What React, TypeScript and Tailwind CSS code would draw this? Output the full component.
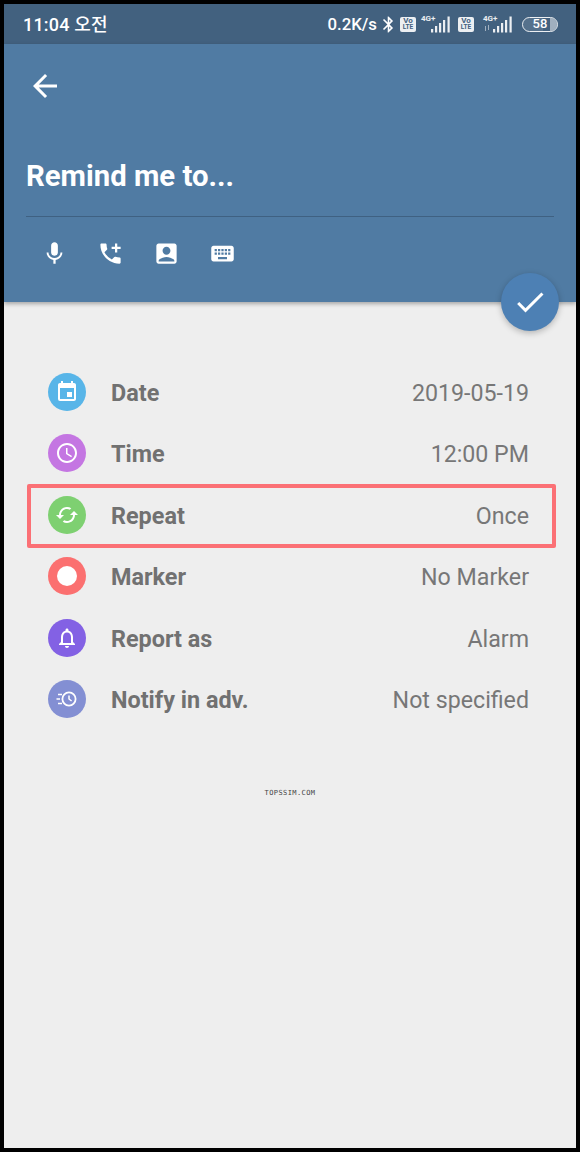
import { MdAccessTime, MdAccountBox, MdAddIcCall, MdArrowBack, MdBluetooth, MdCheck, MdEvent, MdKeyboard, MdMic, MdNotificationsNone, MdSync } from 'react-icons/md'
import type { ReactNode } from 'react'

const font = { fontFamily: 'Roboto, sans-serif' }

function VoLte() {
  return (
    <div className="flex h-[15px] w-[16px] flex-col items-center justify-center rounded-[2px] bg-white/90 text-[#42617f] [font-family:Roboto,sans-serif] text-[8px] leading-[7px] font-bold">
      <span>Vo</span>
      <span className="text-[6.5px] leading-[7px]">LTE</span>
    </div>
  )
}

function Signal({ arrows }: { arrows?: boolean }) {
  return (
    <div className="relative h-[18px] w-[30px]">
      <span className="absolute top-[-1px] left-0 text-[8px] leading-[10px] font-bold text-white/90">4G+</span>
      <svg width="30" height="18" viewBox="0 0 30 18" className="absolute inset-0" fill="#fff" fillOpacity="0.9">
        {arrows && <path d="M2 11h1v5H2zM5 10h1v5H5z" fillOpacity="0.5" />}
        <rect x="10" y="14" width="2.2" height="3.5" />
        <rect x="14" y="11" width="2.2" height="6.5" />
        <rect x="18" y="8" width="2.2" height="9.5" />
        <rect x="22" y="5" width="2.2" height="12.5" />
        <rect x="26.5" y="1.5" width="2.2" height="16" />
      </svg>
    </div>
  )
}

function Battery() {
  return (
    <div className="relative flex h-[15px] w-[36px] items-center justify-center overflow-hidden rounded-full border border-white/90 text-[13px] font-medium text-white">
      <div className="absolute inset-y-0 left-0 w-[58%] bg-white/10" />
      <div className="absolute inset-y-0 right-0 w-[7px] bg-white/50" />
      <span className="relative">58</span>
    </div>
  )
}

function AdvIcon() {
  return (
    <svg width="24" height="24" viewBox="0 0 24 24" fill="none" stroke="#fff" strokeWidth="1.8">
      <circle cx="14" cy="12" r="6.6" />
      <path d="M14 8.5V12l2.6 2" strokeWidth="1.5" />
      <path d="M3 7.5h4M1.5 12h3.5M3 16.5h4" strokeWidth="1.6" />
    </svg>
  )
}

interface RowProps {
  color: string
  icon: ReactNode
  label: string
  value: string
}

function Row({ color, icon, label, value }: RowProps) {
  return (
    <div className="flex h-[61.5px] items-center pr-[47px] pl-[44px]">
      <div className={`flex h-[38px] w-[38px] shrink-0 items-center justify-center rounded-full text-white ${color}`}>{icon}</div>
      <span className="ml-[25px] pt-[3px] text-[23.4px] font-bold text-[#717171]">{label}</span>
      <span className="ml-auto pt-[3px] text-[23.2px] text-[#777777]">{value}</span>
    </div>
  )
}

export default function App() {
  return (
    <div className="h-[1152px] w-[580px] overflow-hidden bg-black pt-1 pr-1 pb-1 pl-1" style={font}>
      <div className="relative flex h-[1144px] w-[572px] flex-col bg-[#eeeeee]">
        <div className="flex h-[40px] shrink-0 items-center bg-[#42617f] pr-[18px] pl-[19px] text-white">
          <span className="pt-[1px] text-[18px] font-medium tracking-[0.2px] [font-family:Roboto,'Noto_Sans_CJK_KR',sans-serif]">11:04 오전</span>
          <div className="ml-auto flex items-center">
            <span className="pt-[1px] text-[16.8px] font-medium">0.2K/s</span>
            <MdBluetooth size={19} className="ml-[2px]" />
            <div className="ml-[2px]"><VoLte /></div>
            <div className="ml-[5px]"><Signal /></div>
            <div className="ml-[7px]"><VoLte /></div>
            <div className="ml-[9px]"><Signal arrows /></div>
            <div className="ml-[9px]"><Battery /></div>
          </div>
        </div>

        <div className="flex h-[258px] shrink-0 flex-col bg-[#507ba3] pr-[22px] pl-[22px] shadow-[0_2px_4px_rgba(0,0,0,0.3)]">
          <div className="mt-[23.5px] flex pl-[1px] text-white">
            <MdArrowBack size={36} />
          </div>
          <div className="mt-[52.5px] text-[29.3px] leading-[40px] font-bold text-white">Remind me to...</div>
          <div className="mt-[20px] h-px bg-[#3f6182]" />
          <div className="mt-[22.5px] flex gap-[29px] pl-[14.5px] text-white">
            <MdMic size={27} />
            <MdAddIcCall size={27} />
            <MdAccountBox size={27} />
            <MdKeyboard size={27} />
          </div>
        </div>

        <div className="absolute top-[269px] left-[496.5px] flex h-[58px] w-[58px] items-center justify-center rounded-full bg-[#4d80b4] text-white shadow-[0_2px_6px_rgba(0,0,0,0.25)]">
          <MdCheck size={36} />
        </div>

        <div className="relative mt-[59px]">
          <Row color="bg-[#58b5e8]" icon={<MdEvent size={24} />} label="Date" value="2019-05-19" />
          <Row color="bg-[#c476e2]" icon={<MdAccessTime size={24} />} label="Time" value="12:00 PM" />
          <Row color="bg-[#7ed071]" icon={<MdSync size={24} className="rotate-90" />} label="Repeat" value="Once" />
          <Row color="bg-[#fb7070]" icon={<div className="h-[20px] w-[20px] rounded-full bg-white" />} label="Marker" value="No Marker" />
          <Row color="bg-[#8361e4]" icon={<MdNotificationsNone size={24} />} label="Report as" value="Alarm" />
          <Row color="bg-[#838fd3]" icon={<AdvIcon />} label="Notify in adv." value="Not specified" />
          <div className="absolute top-[122.5px] left-[23px] h-[64px] w-[529px] rounded-[2px] border-4 border-[#fb7075]" />
        </div>

        <div className="mt-[58px] text-center text-[7px] leading-[10px] tracking-[0.4px] text-[#444] [font-family:'DejaVu_Sans_Mono',monospace]">TOPSSIM.COM</div>
      </div>
    </div>
  )
}
